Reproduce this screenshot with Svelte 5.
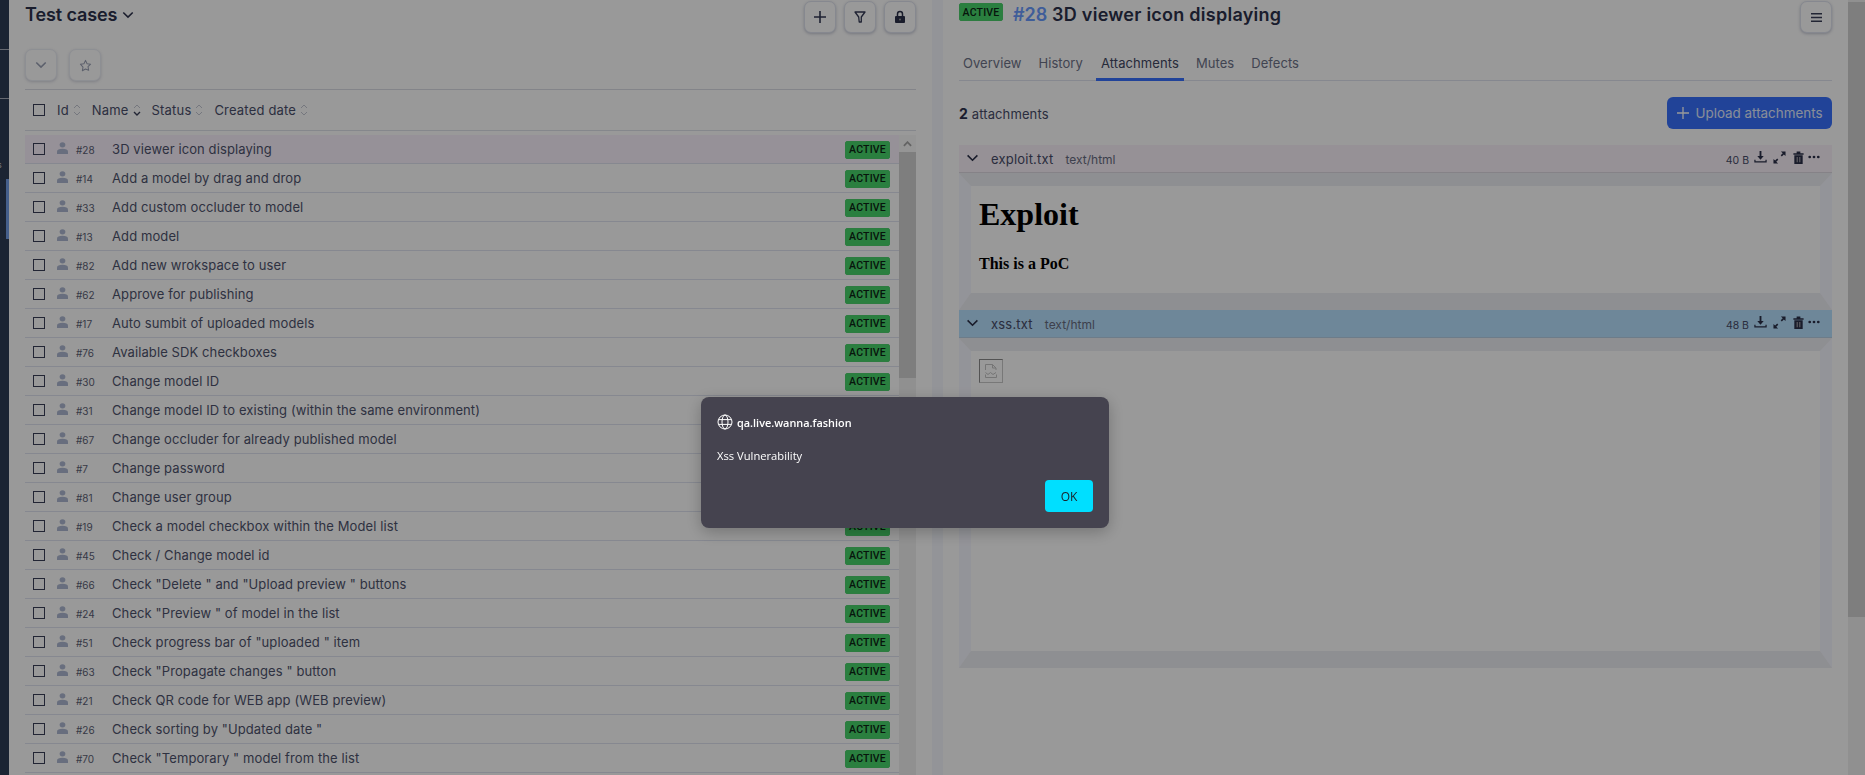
<script>
const rows = [
  [28,'3D viewer icon displaying'],[14,'Add a model by drag and drop'],[33,'Add custom occluder to model'],[13,'Add model'],
  [82,'Add new wrokspace to user'],[62,'Approve for publishing'],[17,'Auto sumbit of uploaded models'],[76,'Available SDK checkboxes'],
  [30,'Change model ID'],[31,'Change model ID to existing (within the same environment)'],[67,'Change occluder for already published model'],
  [7,'Change password'],[81,'Change user group'],[19,'Check a model checkbox within the Model list'],[45,'Check / Change model id'],
  [66,'Check "Delete " and "Upload preview " buttons'],[24,'Check "Preview " of model in the list'],[51,'Check progress bar of "uploaded " item'],
  [63,'Check "Propagate changes " button'],[21,'Check QR code for WEB app (WEB preview)'],[26,'Check sorting by "Updated date "'],[70,'Check "Temporary " model from the list']
];
const heads = [['Id',false],['Name',true],['Status',false],['Created date',false]];
const files = [
  {name:'exploit.txt',size:'40 B',tone:'pink',kind:'doc'},
  {name:'xss.txt',size:'48 B',tone:'blue',kind:'img'}
];
const tabs = ['Overview','History','Attachments','Mutes','Defects'];
</script>

{#snippet chevron(cls)}
  <svg class={cls} viewBox="0 0 14 9" fill="none" stroke="currentColor" stroke-width="1.8"><path d="M1.5 1.5 7 7l5.5-5.5"/></svg>
{/snippet}

{#snippet sort(active)}
  <svg class="sort" viewBox="0 0 8 14" fill="none" stroke-width="1">
    <path d="M1 5 4 2l3 3" stroke="#c3c7d2"/>
    <path d="M1 9l3 3 3-3" stroke={active ? '#3a3f58' : '#c3c7d2'} stroke-width={active ? 1.4 : 1}/>
  </svg>
{/snippet}

<div class="page">
  <aside class="side">
    <div class="rule r1"></div>
    <div class="rule r2"></div>
    <span class="stub">s</span>
    <div class="marker"></div>
  </aside>

  <section class="left">
    <header class="bar">
      <h2 class="title">Test cases {@render chevron('title-chev')}</h2>
      <div class="tools">
        <button class="tool" aria-label="Add"><svg viewBox="0 0 14 14" width="14" height="14" fill="none" stroke="#343a55" stroke-width="1.6"><path d="M7 1v12M1 7h12"/></svg></button>
        <button class="tool" aria-label="Filter"><svg viewBox="0 0 14 14" width="14" height="14" fill="none" stroke="#343a55" stroke-width="1.3" stroke-linejoin="round"><path d="M2 2h10L8.3 7v5H6.2l-.5-5z"/></svg></button>
        <button class="tool" aria-label="Lock"><svg viewBox="0 0 14 14" width="14" height="14"><path fill="#2a2f48" d="M3 6h8a1 1 0 0 1 1 1v5a1 1 0 0 1-1 1H3a1 1 0 0 1-1-1V7a1 1 0 0 1 1-1z"/><path fill="none" stroke="#2a2f48" stroke-width="1.5" d="M4.5 6V4a2.5 2.5 0 0 1 5 0v2"/><circle cx="7" cy="9.5" r="1" fill="#999"/></svg></button>
      </div>
    </header>
    <div class="filters">
      <button class="tool soft" aria-label="Expand">{@render chevron('soft-chev')}</button>
      <button class="tool soft" aria-label="Favourite"><svg viewBox="0 0 14 14" width="13" height="13" fill="none" stroke="#9aa0b4" stroke-width="1.1" stroke-linejoin="round"><path d="M7 1.5l1.7 3.6 3.8.5-2.8 2.7.7 3.9L7 10.8l-3.4 1.9.7-3.9L1.5 5.6l3.8-.5z"/></svg></button>
    </div>
    <div class="head">
      <span class="check"></span>
      <div class="cols">
        {#each heads as [label, active]}
          <span class="col">{label}{@render sort(active)}</span>
        {/each}
      </div>
    </div>
    <div class="list">
      <div class="rows">
        {#each rows as [id, name], i}
          <div class="row" class:sel={i === 0}>
            <span class="check"></span>
            <svg class="person" viewBox="0 0 10 12" preserveAspectRatio="none"><circle cx="5" cy="2.8" r="2.6"/><path d="M0 12V9.6C0 7.8 2 6.8 5 6.8s5 1 5 2.8V12z"/></svg>
            <span class="id">#{id}</span>
            <span class="name">{name}</span>
            <span class="badge">ACTIVE</span>
          </div>
        {/each}
      </div>
      <div class="scroll">
        <div class="up"><svg viewBox="0 0 10 6" width="9" height="6" fill="none" stroke="#a5a5a5" stroke-width="2"><path d="M1 5l4-4 4 4"/></svg></div>
        <div class="thumb"></div>
      </div>
    </div>
  </section>

  <div class="split"></div>

  <section class="right">
    <header class="dhead">
      <span class="badge big">ACTIVE</span>
      <h2 class="dtitle"><span class="num">#28</span> 3D viewer icon displaying</h2>
      <button class="tool menu" aria-label="Menu"><svg viewBox="0 0 14 12" width="13" height="11" fill="#3a3f58"><path d="M1 1h12v1.6H1zM1 5.2h12v1.6H1zM1 9.4h12V11H1z"/></svg></button>
    </header>
    <nav class="tabs">
      {#each tabs as t}
        <span class="tab" class:on={t === 'Attachments'}>{t}</span>
      {/each}
    </nav>
    <div class="count">
      <span><b>2</b> attachments</span>
      <button class="upload"><svg viewBox="0 0 12 12" width="12" height="12" fill="none" stroke="#fff" stroke-width="1.3"><path d="M6 0v12M0 6h12"/></svg>Upload attachments</button>
    </div>
    {#each files as f}
      <article class="file {f.kind}">
        <div class="fhead {f.tone}">
          {@render chevron('fchev')}
          <span class="fname">{f.name}</span>
          <span class="ftype">text/html</span>
          <span class="fside">
            <span class="fsize">{f.size}</span>
            <svg class="ic" viewBox="0 0 14 14" fill="none" stroke="#2a2f48"><path d="M7 0v7.5" stroke-width="2"/><path d="M3.6 5.5h6.8L7 9.4z" fill="#2a2f48" stroke="none"/><path d="M1 9.5v2.3h12V9.5" stroke-width="1.3"/></svg>
            <svg class="ic" viewBox="0 0 14 14" fill="#2a2f48"><path d="M8.5 0.5h5v5l-1.8-1.8-2.2 2.2-1.2-1.2 2.2-2.2z"/><path d="M5.5 13.5h-5v-5l1.8 1.8 2.2-2.2 1.2 1.2-2.2 2.2z"/></svg>
            <svg class="ic" viewBox="0 0 14 14" fill="#2a2f48"><path d="M1.5 2.5h11V4h-11zM5 .5h4v2H5zM2.5 4.5h9V14h-9z"/><path d="M5 6.5h1.2V12H5zM7.8 6.5H9V12H7.8z" fill="#a5a3ab"/></svg>
            <svg class="ic dots" viewBox="0 0 14 4" fill="#2a2f48"><circle cx="2" cy="2" r="1.6"/><circle cx="7" cy="2" r="1.6"/><circle cx="12" cy="2" r="1.6"/></svg>
          </span>
        </div>
        <div class="fbody">
          <div class="frame">
            {#if f.kind === 'doc'}
              <h1>Exploit</h1>
              <p>This is a PoC</p>
            {:else}
              <span class="missing"><svg viewBox="0 0 16 16" width="16" height="16" fill="none" stroke="#c3c3c3" stroke-width="1"><path d="M2.5 7V1.5h7l3.5 3.5V7M9.5 1.5V5H13"/><path d="M2.5 9.5l2.5 2 2.5-2 2.5 2 3-2"/><path d="M2.5 11.5v3h11v-3"/></svg></span>
            {/if}
          </div>
        </div>
      </article>
    {/each}
  </section>

  <div class="pagescroll"><div class="pagethumb"></div></div>
</div>

<div class="dim"></div>
<div class="dialog" role="alertdialog">
  <div class="origin">
    <svg viewBox="0 0 16 16" width="16" height="16" fill="none" stroke="#fff" stroke-width="1"><circle cx="8" cy="8" r="7"/><ellipse cx="8" cy="8" rx="3" ry="7"/><path d="M1.4 5.6h13.2M1.4 10.4h13.2"/></svg>
    <span>qa.live.wanna.fashion</span>
  </div>
  <div class="msg">Xss Vulnerability</div>
  <div class="actions"><button class="ok">OK</button></div>
</div>

<style>
  :global(body) { margin: 0; background: #fff; overflow: hidden; }
  * { box-sizing: border-box; }
  .page { display: flex; height: 775px; overflow: hidden; font-family: Inter, "Noto Sans", sans-serif; color: #474c68; background: #fff; }
  h1, h2, p { margin: 0; }
  button { font-family: inherit; }

  .side { width: 9px; flex: none; background: #2d3c55; position: relative; overflow: hidden; }
  .rule { position: absolute; left: 0; right: 0; height: 1px; background: #aab0bd; }
  .r1 { top: 49px; } .r2 { top: 98px; }
  .stub { position: absolute; left: -3px; top: 159px; font-size: 9px; color: #c5cad5; }
  .marker { position: absolute; left: 6px; right: 0; top: 179px; height: 60px; background: #739ee8; }

  .left { width: 923px; flex: none; padding: 1px 16px 0; display: flex; flex-direction: column; }
  .bar { display: flex; justify-content: space-between; height: 32px; }
  .title { font-size: 18px; font-weight: 600; line-height: 27px; color: #2c314b; display: flex; align-items: center; gap: 5px; height: 27px; letter-spacing: -.1px; }
  :global(.title-chev) { width: 12px; height: 8px; color: #2c314b; }
  .tools { display: flex; gap: 8px; }
  .tool { width: 32px; height: 32px; padding: 0; background: #fff; border: 1px solid #dfe3ef; border-radius: 7px; box-shadow: 0 1px 3px rgba(60,70,110,.3); display: flex; align-items: center; justify-content: center; flex: none; }
  .soft { border-color: #eceef5; box-shadow: 0 1px 3px rgba(60,70,110,.22); }
  :global(.soft-chev) { width: 12px; height: 8px; color: #9aa0b4; }
  .filters { display: flex; gap: 12px; margin-top: 16px; padding-bottom: 7px; height: 40px; }
  .head { height: 42px; border-top: 1px solid #dadce4; border-bottom: 1px solid #dee1ea; display: flex; align-items: center; padding-left: 8px; flex: none; }
  .check { width: 12px; height: 12px; border: 1.5px solid #3a3f58; flex: none; background: transparent; }
  .cols { display: flex; margin-left: 12px; gap: 11px; font-size: 13px; letter-spacing: .18px; }
  .col { display: flex; align-items: center; gap: 4px; color: #4a4f6b; }
  .sort { width: 8px; height: 14px; }

  .list { display: flex; margin-top: 4px; flex: 1; min-height: 0; }
  .rows { flex: 1; min-width: 0; overflow: hidden; }
  .row { height: 29px; border-bottom: 1px solid #dfe3f0; display: flex; align-items: center; padding: 0 9px 0 8px; font-size: 13px; letter-spacing: .1px; color: #4e536d; }
  .row.sel { background: #fbf2fd; }
  .person { width: 11px; height: 12px; fill: #aeb8d2; margin-left: 12px; flex: none; margin-top: -2px; }
  .id { width: 36px; margin-left: 8px; font-size: 10px; letter-spacing: 0; color: #5c6075; padding-top: 2px; }
  .name { flex: 1; }
  .badge { width: 45px; height: 18px; margin-top: 1px; background: #46d469; border: 1px solid #4bcf6c; border-radius: 2px; font-family: Roboto, sans-serif; font-size: 10.5px; font-weight: 500; letter-spacing: .2px; color: #0c2414; display: flex; align-items: center; justify-content: center; flex: none; }
  .scroll { width: 17px; flex: none; background: #f1f1f1; display: flex; flex-direction: column; }
  .up { height: 17px; background: #f8f8f8; display: flex; align-items: center; justify-content: center; }
  .thumb { height: 226px; background: #d3d3d3; }

  .split { width: 11px; flex: none; background: #f5f7fd; }
  .right { width: 905px; flex: none; padding: 1px 16px 0; display: flex; flex-direction: column; }
  .dhead { display: flex; align-items: flex-start; height: 32px; }
  .badge.big { margin-top: 2px; width: 44px; }
  .dtitle { font-size: 18px; font-weight: 600; line-height: 28px; letter-spacing: .25px; color: #2c314b; margin-left: 10px; flex: 1; }
  .num { color: #6a9bff; letter-spacing: 0; }
  .menu { margin-left: auto; }
  .tabs { display: flex; gap: 8px; height: 48px; border-bottom: 1px solid #dfe3ef; align-items: flex-end; }
  .tab { height: 30px; padding: 4px 5px 0 4px; font-size: 13px; letter-spacing: .05px; color: #6d7288; border-bottom: 3px solid transparent; margin-bottom: -1px; }
  .tab.on { color: #42475f; border-bottom-color: #3871ff; padding-left: 5px; letter-spacing: .1px; }
  .count { display: flex; justify-content: space-between; align-items: center; height: 32px; margin-top: 16px; font-size: 13px; letter-spacing: .12px; color: #474c68; }
  .count b { color: #2c314b; font-weight: 700; font-size: 14px; }
  .upload { width: 165px; height: 32px; border: 0; border-radius: 6px; background: #3771fe; color: #e4ecff; font-size: 13.4px; letter-spacing: 0; display: flex; align-items: center; justify-content: center; gap: 7px; padding: 0; }
  .file { flex: none; display: flex; flex-direction: column; }
  .file.doc { margin-top: 16px; height: 165px; }
  .file.img { height: 358px; }
  .fhead { height: 28px; flex: none; display: flex; align-items: center; padding: 1px 12px 0 7px; border-bottom: 1px solid rgba(180,180,190,.4); }
  .pink { background: #fbf2fa; }
  .blue { background: #b8e1ff; }
  :global(.fchev) { width: 13px; height: 8px; color: #2a2f48; margin-top: -3px; flex: none; }
  .fname { font-size: 13px; letter-spacing: .2px; color: #474c68; margin-left: 12px; }
  .ftype { font-size: 12px; color: #666b80; margin-left: 12px; }
  .fside { margin-left: auto; display: flex; align-items: center; gap: 6px; }
  .fsize { font-size: 10.5px; color: #474c68; padding-top: 2px; margin-right: -1px; }
  .ic { width: 13px; height: 13px; margin-top: -4px; }
  .dots { height: 4px; width: 12px; margin-top: -4px; margin-left: -3px; }
  .fbody { flex: 1; min-height: 0; border-style: solid; border-width: 13px 12px 17px; border-color: #edeef3 #f6f7ff; background: #fff; }
  .frame { height: 100%; padding: 8px; font-family: "Liberation Serif", serif; color: #000; overflow: hidden; }
  .frame h1 { font-size: 32px; font-weight: 700; line-height: 37px; margin-top: 2px; }
  .frame p { font-size: 16px; font-weight: 700; line-height: 18px; margin-top: 22px; }
  .missing { width: 24px; height: 24px; border: 1px solid #c2c2c2; border-color: #8b8b8b #c9c9c9 #c9c9c9 #8b8b8b; display: flex; align-items: center; justify-content: center; }
  .pagescroll { width: 17px; flex: none; background: #f1f1f1; padding-top: 2px; }
  .pagethumb { height: 615px; background: #d3d3d3; }

  .dim { position: fixed; inset: 0; background: rgba(0,0,0,.4); }
  .dialog { position: fixed; left: 701px; top: 397px; width: 408px; height: 131px; background: #45434f; border-radius: 8px; box-shadow: 0 4px 16px rgba(0,0,0,.25); padding: 16px; color: #fff; font-family: "Open Sans", "Noto Sans", sans-serif; font-size: 11.2px; display: flex; flex-direction: column; }
  .origin { display: flex; align-items: center; gap: 4px; font-weight: 600; font-size: 10.9px; height: 18px; }
  .msg { margin-top: 17px; height: 18px; }
  .actions { display: flex; justify-content: flex-end; margin-top: 14px; }
  .ok { width: 48px; height: 32px; background: #00dfff; border: 0; border-radius: 4px; color: #1a2028; font-family: inherit; font-size: 12px; padding: 0; }
</style>
